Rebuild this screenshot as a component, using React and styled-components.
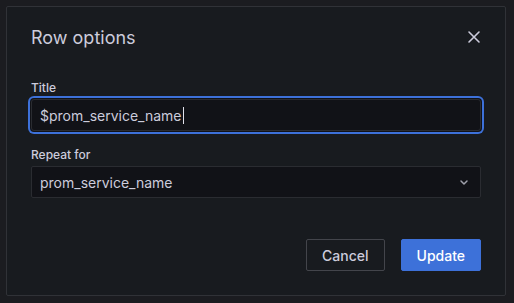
import React from "react";
import styled, { createGlobalStyle } from "styled-components";

const Global = createGlobalStyle`
  html, body { margin: 0; padding: 0; background: #1c1d21; }
  body { font-family: Inter, "Noto Sans", sans-serif; -webkit-font-smoothing: antialiased; }
  * { box-sizing: border-box; }
`;

const Backdrop = styled.div`
  width: 514px;
  height: 303px;
  padding: 6px 8px 7px 6px;
  background: #1b1c20;
`;

const Modal = styled.div`
  width: 500px;
  height: 290px;
  background: #181b1f;
  border: 1px solid #303237;
  border-radius: 2px;
  display: flex;
  flex-direction: column;
`;

const Header = styled.div`
  height: 60px;
  padding: 0 24px;
  display: flex;
  align-items: center;
  justify-content: space-between;
`;

const Title = styled.h2`
  margin: 0;
  font-size: 18px;
  font-weight: 400;
  color: #ccccdc;
`;

const CloseButton = styled.button`
  background: none;
  border: none;
  padding: 0;
  margin-right: -3px;
  width: 20px;
  height: 20px;
  display: flex;
  align-items: center;
  justify-content: center;
  color: #ccccdc;
`;

const Body = styled.div`
  padding: 13px 24px 24px;
  display: flex;
  flex-direction: column;
  flex: 1;
`;

const Field = styled.div`
  display: flex;
  flex-direction: column;
  margin-bottom: ${(p) => (p.$last ? "0" : "16px")};
`;

const Label = styled.label`
  font-size: 12px;
  font-weight: 500;
  line-height: 15px;
  color: #ccccdc;
  margin-bottom: 4px;
`;

const InputBox = styled.div`
  height: 32px;
  background: #111217;
  border: 1px solid #2a2c31;
  border-radius: ${(p) => (p.$focused ? "3px" : "2px")};
  display: flex;
  align-items: center;
  padding: 0 8px;
  font-size: 14px;
  color: #ccccdc;
  box-shadow: ${(p) =>
    p.$focused ? "0 0 0 1px #111217, 0 0 0 3px #3d71d9" : "none"};
  justify-content: space-between;
`;

const Caret = styled.span`
  display: inline-block;
  width: 1px;
  height: 17px;
  background: #e0e0ea;
  margin-left: 1px;
  vertical-align: -3px;
`;

const Footer = styled.div`
  margin-top: auto;
  display: flex;
  justify-content: flex-end;
  gap: 16px;
`;

const Button = styled.button`
  height: 32px;
  padding: 0 15px;
  border-radius: 2px;
  font-family: Inter, "Noto Sans", sans-serif;
  font-size: 14px;
  font-weight: 500;
  border: 1px solid ${(p) => (p.$primary ? "#3d71d9" : "#43454b")};
  background: ${(p) => (p.$primary ? "#3d71d9" : "transparent")};
  color: ${(p) => (p.$primary ? "#ffffff" : "#ccccdc")};
`;

export default function App() {
  return (
    <>
      <Global />
      <Backdrop>
        <Modal>
          <Header>
            <Title>Row options</Title>
            <CloseButton aria-label="Close">
              <svg width="14" height="14" viewBox="0 0 14 14" fill="none">
                <path d="M2 2L12 12M12 2L2 12" stroke="#ccccdc" strokeWidth="1.6" strokeLinecap="round" />
              </svg>
            </CloseButton>
          </Header>
          <Body>
            <Field>
              <Label>Title</Label>
              <InputBox $focused>
                <span>
                  $prom_service_name
                  <Caret />
                </span>
              </InputBox>
            </Field>
            <Field $last>
              <Label>Repeat for</Label>
              <InputBox>
                <span>prom_service_name</span>
                <svg width="16" height="16" viewBox="0 0 16 16" fill="none">
                  <path d="M5 7l3 3 3-3" stroke="#9fa0ab" strokeWidth="1.5" strokeLinecap="round" strokeLinejoin="round" />
                </svg>
              </InputBox>
            </Field>
            <Footer>
              <Button>Cancel</Button>
              <Button $primary>Update</Button>
            </Footer>
          </Body>
        </Modal>
      </Backdrop>
    </>
  );
}
